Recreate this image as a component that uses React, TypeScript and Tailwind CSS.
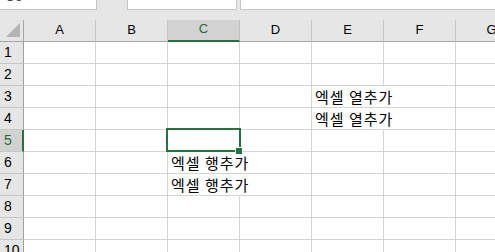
import React from 'react';

const COLS = ['A', 'B', 'C', 'D', 'E', 'F', 'G'];
const ROWS = [1, 2, 3, 4, 5, 6, 7, 8, 9, 10];

// text per cell, keyed "col-row"
const DATA: Record<string, string> = {
  'E-3': '엑셀 열추가',
  'E-4': '엑셀 열추가',
  'C-6': '엑셀 행추가',
  'C-7': '엑셀 행추가',
};

const Cell: React.FC<{ col: string; row: number }> = ({ col, row }) => {
  const text = DATA[`${col}-${row}`];
  const selected = col === 'C' && row === 5;
  return (
    <div
      className={`relative w-[72px] h-[22px] shrink-0 border-b border-r border-b-[#d4d4d4] flex items-center ${
        text ? 'border-r-transparent z-10' : 'border-r-[#d4d4d4]'
      }`}
    >
      {text && (
        <span className="pl-[3px] whitespace-nowrap text-[15px] leading-[20px] tracking-[1px] text-black font-['Noto_Sans_CJK_KR',sans-serif] bg-white">
          {text}
        </span>
      )}
      {selected && (
        <div className="absolute -left-[2px] -top-[2px] w-[75px] h-[24px] border-2 border-[#217346] z-20">
          <div className="absolute left-[67px] top-[17px] w-[8px] h-[8px] bg-[#217346] border border-white" />
        </div>
      )}
    </div>
  );
};

export default function App() {
  return (
    <div className="w-[495px] h-[252px] overflow-hidden bg-white font-['Liberation_Sans',sans-serif]">
      {/* formula bar strip */}
      <div className="h-[20px] bg-[#e6e6e6] flex items-start">
        <div className="w-[97px] h-[10px] bg-white border-b border-r border-[#c6c6c6] overflow-hidden">
          <span className="block pl-[5px] mt-[-11px] text-[14px] leading-[14px] text-[#444]">C5</span>
        </div>
        <div className="ml-[30px] w-[110px] h-[10px] bg-white border border-t-0 border-[#c6c6c6]" />
        <div className="ml-[3px] flex-1 h-[10px] bg-white border-b border-l border-[#c6c6c6]" />
      </div>

      {/* column headers */}
      <div className="flex h-[22px]">
        <div className="relative w-[24px] h-[22px] shrink-0 bg-[#e6e6e6] border-b border-r border-[#a6a6a6]">
          <svg className="absolute left-[6px] top-[3px]" width="14" height="14" viewBox="0 0 14 14">
            <polygon points="14,0 14,14 0,14" fill="#b4b4b4" />
          </svg>
        </div>
        {COLS.map((c) => (
          <div
            key={c}
            className={`w-[72px] h-[22px] shrink-0 flex items-center justify-center pb-[2px] text-[13px] ${
              c === 'C'
                ? 'bg-[#d2d2d2] border-b-2 border-b-[#217346] border-r border-r-[#c0c0c0] text-[#1e6b41]'
                : 'bg-[#e6e6e6] border-b border-b-[#a6a6a6] border-r border-r-[#c6c6c6] text-black'
            }`}
          >
            {c}
          </div>
        ))}
      </div>

      {/* rows */}
      {ROWS.map((r) => (
        <div key={r} className="flex h-[22px]">
          <div
            className={`w-[24px] h-[22px] shrink-0 flex items-center pl-[4px] text-[14px] border-b border-b-[#c6c6c6] ${
              r === 5
                ? 'bg-[#d2d2d2] border-r-2 border-r-[#217346] text-[#1e6b41]'
                : 'bg-[#e6e6e6] border-r border-r-[#9e9e9e] text-black'
            }`}
          >
            {r}
          </div>
          {COLS.map((c) => (
            <Cell key={c} col={c} row={r} />
          ))}
        </div>
      ))}
    </div>
  );
}
